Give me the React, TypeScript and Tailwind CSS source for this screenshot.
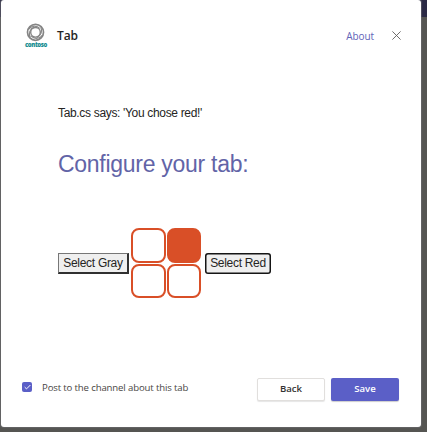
import React from "react";

const ui = "font-['Open_Sans','Noto_Sans',sans-serif]";

function ContosoLogo() {
  return (
    <div className="flex w-[22px] flex-col items-center">
      <svg width="20" height="19" viewBox="0 0 20 19" fill="none" stroke="#858585">
        <circle cx="9.5" cy="9.3" r="8" strokeWidth="1.7" />
        <circle cx="9.5" cy="9.3" r="4.8" strokeWidth="1.4" />
        <path d="M2.5 6.5C5 2.8 10.5 2 13.7 5.4M16.3 12.2C14 15.8 8.5 16.6 5.3 13.2M14.7 4.2C16.9 8 15 13 10.9 14.2M4.3 14.4C2.1 10.6 4 5.6 8.1 4.4" strokeWidth="1.1" />
      </svg>
      <span className="font-['Open_Sans',sans-serif] text-[6px] font-extrabold leading-[6px] tracking-[-0.35px] text-[#178d91]">contoso</span>
    </div>
  );
}

function Tile({ filled = false }: { filled?: boolean }) {
  return (
    <div className={`h-[34.5px] w-[34.5px] rounded-[8px] border-2 border-[#d94f27] ${filled ? "bg-[#d94f27]" : "bg-white"}`} />
  );
}

export default function App() {
  return (
    <div className="h-[432px] w-[427px] overflow-hidden bg-[linear-gradient(#2a2945_0px,#2a2945_17px,#555552_17px)] pb-[5px] pl-px pr-[6px]">
      <main className="flex h-[427px] w-[420px] flex-col rounded-[3px] bg-white shadow-[0_0_1px_1px_rgba(110,110,115,0.6)]">
        <header className={`flex h-[71px] items-center pl-6 pr-[20px] ${ui}`}>
          <ContosoLogo />
          <h1 className="ml-[10px] text-[12px] font-semibold leading-4 tracking-[-0.15px] text-[#252423]">Tab</h1>
          <a className="ml-auto text-[10px] leading-4 tracking-[-0.1px] text-[#6264b8]">About</a>
          <svg className="ml-[18px]" width="9" height="9" viewBox="0 0 9 9" stroke="#605e5c" strokeWidth="0.9">
            <path d="M0.4 0.4L8.6 8.6M8.6 0.4L0.4 8.6" />
          </svg>
        </header>
        <section className="grow pl-[57px] pt-[34px] font-['Liberation_Sans',Arial,sans-serif]">
          <p className="text-[12px] leading-4 tracking-[-0.33px] text-[#252423]">Tab.cs says: 'You chose red!'</p>
          <h2 className="mt-[29px] text-[23px] leading-7 tracking-[-0.28px] text-[#6264a7]">Configure your tab:</h2>
          <div className="mt-[50px] flex items-center">
            <button className="h-[21px] w-[71px] whitespace-nowrap border-b-2 border-l border-r-2 border-t border-b-[#303030] border-l-[#777] border-r-[#303030] border-t-[#777] bg-[#efefef] text-[12px] leading-[18px] tracking-[-0.3px] text-[#252423]">Select Gray</button>
            <div className="ml-[2px] grid grid-cols-2 gap-x-px gap-y-px">
              <Tile />
              <Tile filled />
              <Tile />
              <Tile />
            </div>
            <button className="ml-[4px] h-[21px] w-[66px] whitespace-nowrap rounded-[3px] bg-[#efefef] text-[12px] leading-[18px] tracking-[-0.3px] text-[#252423] shadow-[inset_0_0_0_1.5px_#151515]">Select Red</button>
          </div>
        </section>
        <footer className={`mb-[26px] flex h-[23px] items-center pl-[21px] pr-[22px] ${ui}`}>
          <span className="mb-[5px] flex h-[10px] w-[10px] items-center justify-center rounded-[2px] bg-[#5b5fc7]">
            <svg width="7" height="6" viewBox="0 0 7 6" fill="none" stroke="white" strokeWidth="1">
              <path d="M0.7 3.1L2.5 4.9L6.4 1" />
            </svg>
          </span>
          <span className="mb-[3px] ml-[10px] whitespace-nowrap text-[9.6px] tracking-[-0.14px] text-[#484644]">Post to the channel about this tab</span>
          <button className="ml-auto h-[23px] w-[68px] rounded-[2px] border border-[#e1dfdd] bg-white text-[9.6px] font-semibold text-[#323130] shadow-[0_1px_1px_rgba(0,0,0,0.1)]">Back</button>
          <button className="ml-[6px] h-[23px] w-[68px] rounded-[2px] bg-[#5b5fc7] text-[9.6px] font-semibold text-white shadow-[0_1px_1px_rgba(0,0,0,0.2)]">Save</button>
        </footer>
      </main>
    </div>
  );
}
